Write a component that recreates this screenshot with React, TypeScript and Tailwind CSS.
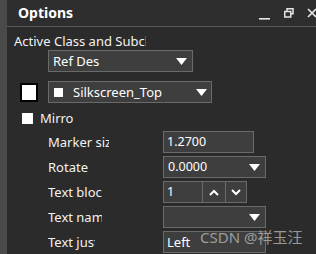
import React from "react";

const Arrow = () => (
  <svg width="11" height="7" viewBox="0 0 11 7">
    <polygon points="0,0 11,0 5.5,7" fill="#ffffff" />
  </svg>
);

const Label = ({ text, w }: { text: string; w: string }) => (
  <div className={`ml-[41px] ${w} overflow-hidden whitespace-nowrap text-[13px] leading-[22px] text-[#f2f2f2]`}>
    {text}
  </div>
);

export default function App() {
  return (
    <div
      className="relative flex h-[254px] w-[316px] overflow-hidden bg-[#2b2b2b]"
      style={{ fontFamily: '"Noto Sans", "Open Sans", sans-serif' }}
    >
      <div className="w-[7px] shrink-0 bg-[#4a4a4a]" />
      <div className="flex min-w-0 flex-1 flex-col">
        {/* Title bar */}
        <div className="flex h-[27px] shrink-0 items-center border-b border-[#585858] bg-[#2e2e2e] pl-[11px]">
          <span className="text-[14px] font-bold leading-none text-white">Options</span>
          <div className="ml-auto flex items-center">
            <svg width="12" height="12" viewBox="0 0 12 12" className="mr-[13px] mt-[3px]">
              <rect x="0" y="9" width="11" height="1.6" fill="#e6e6e6" />
            </svg>
            <svg width="10" height="10" viewBox="0 0 10 10" className="mr-[13px]">
              <rect x="3" y="0.75" width="6" height="5" fill="none" stroke="#e6e6e6" strokeWidth="1.5" />
              <rect x="0.75" y="3.5" width="6" height="5.5" fill="#2e2e2e" stroke="#e6e6e6" strokeWidth="1.5" />
            </svg>
            <svg width="10" height="10" viewBox="0 0 10 10" className="mr-[-1px]">
              <path d="M1 1 L9 9 M9 1 L1 9" stroke="#e6e6e6" strokeWidth="1.6" />
            </svg>
          </div>
        </div>

        {/* Body */}
        <div className="flex flex-col">
          <div className="ml-[7px] mt-[6px] w-[132px] overflow-hidden whitespace-nowrap text-[13px] leading-[17px] text-[#f2f2f2]">
            Active Class and Subclass
          </div>

          <div className="ml-[41px] flex h-[22px] w-[145px] items-center border border-[#6a6a6a] bg-[#3e3e3e] pl-[4px] pr-[5px]">
            <span className="text-[13px] leading-none text-white">Ref Des</span>
            <span className="ml-auto flex"><Arrow /></span>
          </div>

          <div className="mt-[9px] flex items-center">
            <div className="ml-[13px] h-[19px] w-[18px] border-2 border-black bg-white" />
            <div className="ml-[10px] flex h-[22px] w-[164px] items-center border border-[#6a6a6a] bg-[#3e3e3e] pr-[4px]">
              <div className="ml-[5px] h-[9px] w-[9px] bg-white" />
              <span className="ml-[10px] text-[13px] leading-none text-white">Silkscreen_Top</span>
              <span className="ml-auto flex"><Arrow /></span>
            </div>
          </div>

          <div className="mt-[8px] flex h-[15px] items-center">
            <div className="ml-[15px] h-[11px] w-[11px] bg-white" />
            <div className="ml-[7px] w-[33px] overflow-hidden whitespace-nowrap text-[13px] leading-[15px] text-[#f2f2f2]">
              Mirror
            </div>
          </div>

          {/* Marker size */}
          <div className="mt-[5px] flex h-[22px] items-center">
            <Label text="Marker size" w="w-[61px]" />
            <div className="ml-[54px] flex h-[22px] w-[91px] items-center border border-[#6a6a6a] bg-[#3e3e3e] pl-[3px]">
              <span className="text-[12.5px] leading-none text-white">1.2700</span>
            </div>
          </div>

          {/* Rotate */}
          <div className="mt-[3px] flex h-[22px] items-center">
            <Label text="Rotate" w="w-[61px]" />
            <div className="ml-[54px] flex h-[22px] w-[103px] items-center border border-[#6a6a6a] bg-[#3e3e3e] pl-[4px] pr-[5px]">
              <span className="text-[12.5px] leading-none text-white">0.0000</span>
              <span className="ml-auto flex"><Arrow /></span>
            </div>
          </div>

          {/* Text block */}
          <div className="mt-[3px] flex h-[22px] items-center">
            <Label text="Text block" w="w-[54px]" />
            <div className="ml-[61px] flex h-[22px] w-[84px] border border-[#6a6a6a] bg-[#3e3e3e]">
              <div className="flex w-[39px] items-center border-r border-[#6a6a6a] pl-[3px]">
                <span className="text-[12.5px] leading-none text-white">1</span>
              </div>
              <div className="flex w-[23px] items-center justify-center border-r border-[#6a6a6a]">
                <svg width="10" height="7" viewBox="0 0 10 7">
                  <path d="M1 6 L5 2 L9 6" fill="none" stroke="#ffffff" strokeWidth="2" />
                </svg>
              </div>
              <div className="flex flex-1 items-center justify-center">
                <svg width="10" height="7" viewBox="0 0 10 7">
                  <path d="M1 1 L5 5 L9 1" fill="none" stroke="#ffffff" strokeWidth="2" />
                </svg>
              </div>
            </div>
          </div>

          {/* Text name */}
          <div className="mt-[3px] flex h-[22px] items-center">
            <Label text="Text name" w="w-[54px]" />
            <div className="ml-[61px] flex h-[22px] w-[103px] items-center border border-[#6a6a6a] bg-[#3e3e3e] pr-[5px]">
              <span className="ml-auto flex"><Arrow /></span>
            </div>
          </div>

          {/* Text just */}
          <div className="mt-[3px] flex h-[22px] items-center">
            <Label text="Text just" w="w-[47px]" />
            <div className="ml-[68px] flex h-[22px] w-[103px] items-center border border-[#6a6a6a] bg-[#3e3e3e] pl-[3px] pr-[5px]">
              <span className="text-[13px] leading-none text-white">Left</span>
            </div>
          </div>
        </div>
      </div>

      {/* watermark */}
      <div
        className="absolute left-[200px] top-[227px] whitespace-nowrap text-[15px] leading-[20px] text-[#b4b4b4] opacity-80"
        style={{ fontFamily: '"Noto Sans", "Noto Sans CJK SC", sans-serif' }}
      >
        CSDN @祥玉汪
      </div>
    </div>
  );
}
